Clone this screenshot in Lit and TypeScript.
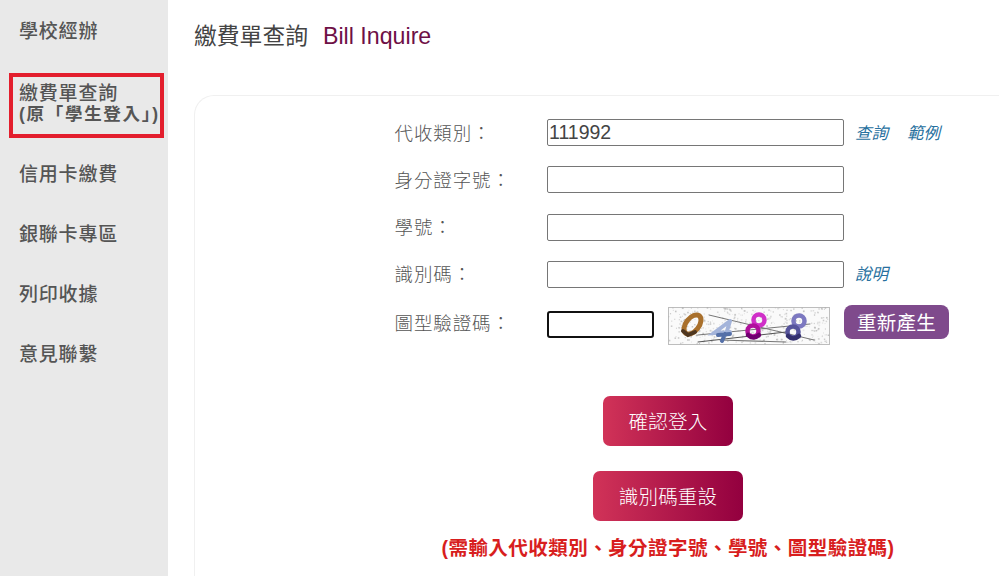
import { LitElement, html, css, svg } from "lit";
import { customElement } from "lit/decorators.js";

const rnd = (i: number, k: number) => {
  const v = Math.sin(i * 12.9898 + k * 78.233) * 43758.5453;
  return v - Math.floor(v);
};
const noise = Array.from({ length: 420 }, (_, i) => ({
  x: rnd(i, 1) * 160,
  y: rnd(i, 2) * 36,
  s: 0.8 + rnd(i, 3) * 1,
  o: 0.2 + rnd(i, 4) * 0.5,
}));

const captcha = svg`
  <svg class="captcha" viewBox="0 0 162 38" width="162" height="38" aria-label="captcha">
    <rect x="0.5" y="0.5" width="161" height="37" fill="#fafafa" stroke="#bdbdbd"/>
    ${noise.map((n) => svg`<rect x=${n.x} y=${n.y} width=${n.s} height=${n.s} fill="#a8a8a8" opacity=${n.o}/>`)}
    <g fill="none" stroke-linecap="round">
      <path d="M41 8 L146 33" stroke="#777" stroke-width="1"/>
      <path d="M30 28 L142 17" stroke="#777" stroke-width="1"/>
      <path d="M30 35 L118 25" stroke="#555" stroke-width="1"/>
      <path d="M52 33 L118 35" stroke="#777" stroke-width="1.2"/>
      <ellipse cx="24.5" cy="17.5" rx="6.5" ry="11" transform="rotate(38 24.5 17.5)" stroke="#a9702c" stroke-width="5"/>
      <path d="M15 24 L20 28 L27 25" stroke="#4e3620" stroke-width="4"/>
      <path d="M62 14 L46 26 L62 25 M62 14 L59 24" stroke="#a4b4da" stroke-width="4"/>
      <path d="M50 28 L62 27 M57 27 L54 34" stroke="#5570a8" stroke-width="4"/>
      <circle cx="91" cy="13" r="5.5" stroke="#d030c8" stroke-width="4.5"/>
      <circle cx="85" cy="24" r="5.5" stroke="#b0109c" stroke-width="4.5"/>
      <path d="M80 28 Q85 33 91 28" stroke="#700070" stroke-width="4.5"/>
      <circle cx="131" cy="14" r="5.5" stroke="#7c78c0" stroke-width="4.5"/>
      <circle cx="125" cy="25" r="5.5" stroke="#56549c" stroke-width="4.5"/>
      <path d="M120 29 Q125 34 131 29" stroke="#33306e" stroke-width="4.5"/>
    </g>
  </svg>`;

@customElement("app-root")
export class AppRoot extends LitElement {
  static styles = css`
    :host {
      display: flex;
      width: 999px;
      height: 576px;
      overflow: hidden;
      background: #fff;
      color: #555;
      font-family: "Liberation Sans", "Noto Sans CJK TC", sans-serif;
    }
    .side {
      flex: 0 0 168px;
      background: #e9e9e9;
      display: flex;
      flex-direction: column;
      box-sizing: border-box;
      padding: 20px 0 0 0;
      font-size: 19px;
      line-height: 24px;
      letter-spacing: 0.8px;
      color: #555;
      font-weight: 500;
    }
    .item {
      padding-left: 19px;
      height: 60px;
    }
    .item.first {
      height: 53px;
    }
    .item.hot {
      box-sizing: border-box;
      height: 65px;
      width: 155px;
      margin-left: 9px;
      border: 4px solid #e31e2d;
      padding: 6px 0 0 6px;
      margin-bottom: 25px;
      line-height: 21px;
    }
    .item.hot small {
      display: block;
      font-size: 17.5px;
      line-height: 21px;
      font-weight: 700;
      white-space: nowrap;
      letter-spacing: 1.7px;
    }
    .main {
      flex: 1;
      min-width: 0;
      padding: 22px 0 0 26px;
      display: flex;
      flex-direction: column;
    }
    h1 {
      margin: 0 0 45px;
      font-size: 22.8px;
      line-height: 28px;
      height: 28px;
      font-weight: 400;
      color: #444;
      display: flex;
      gap: 15px;
    }
    h1 span {
      font-size: 23.2px;
      color: #6e1046;
    }
    .card {
      flex: 1;
      margin-right: -30px;
      border: 1px solid #f0f0f0;
      border-right: 0;
      border-bottom: 0;
      border-top-left-radius: 20px;
      padding: 23px 0 0 199.5px;
      display: flex;
      flex-direction: column;
    }
    .row {
      display: flex;
      align-items: center;
      height: 27px;
      margin-bottom: 20.3px;
    }
    label {
      flex: 0 0 152.5px;
      font-size: 18.5px;
      letter-spacing: 0.9px;
      font-weight: 300;
      color: #555;
      white-space: nowrap;
      margin-top: -2px;
    }
    .field {
      box-sizing: border-box;
      width: 297px;
      height: 27px;
      border: 1px solid #767676;
      border-radius: 2px;
      padding: 0 1px;
      font: 19.5px/25px "Liberation Sans", sans-serif;
      color: #444;
      background: #fff;
    }
    .links {
      margin-left: 11px;
      margin-top: -2px;
      display: flex;
      gap: 19px;
      font-size: 16.5px;
      font-style: italic;
      color: #27709e;
    }
    .vrow {
      height: 38px;
      margin-top: -1.3px;
      margin-bottom: 0;
    }
    .vrow label {
      margin-top: -8px;
    }
    .code {
      box-sizing: border-box;
      width: 107px;
      height: 27px;
      margin-top: -2px;
      border: 2px solid #111;
      border-radius: 3px;
      background: #fff;
      margin-right: 14px;
    }
    .captcha {
      display: block;
      margin-right: 14px;
    }
    .regen {
      width: 105px;
      height: 34px;
      margin-top: -8px;
      border-radius: 8px;
      background: #7f4a8c;
      color: #fff;
      font-size: 19.5px;
      letter-spacing: 0.3px;
      display: flex;
      align-items: center;
      justify-content: center;
    }
    .actions {
      width: 548px;
      margin-left: -0.5px;
      display: flex;
      flex-direction: column;
      align-items: center;
      margin-top: 51px;
    }
    .btn {
      height: 50px;
      border-radius: 7px;
      background: linear-gradient(90deg, #d13358, #93003f);
      color: #fff;
      font-size: 19.5px;
      letter-spacing: 0.2px;
      display: flex;
      align-items: center;
      justify-content: center;
      font-weight: 300;
    }
    .b1 { width: 130px; margin-bottom: 25px; }
    .b2 { width: 150px; margin-bottom: 16px; }
    .note {
      color: #d81e1e;
      font-size: 19.5px;
      line-height: 22px;
      font-weight: 700;
      white-space: nowrap;
      letter-spacing: 0.46px;
    }
  `;

  render() {
    return html`
      <nav class="side">
        <div class="item first">學校經辦</div>
        <div class="item hot">繳費單查詢<small>(原「學生登入」)</small></div>
        <div class="item">信用卡繳費</div>
        <div class="item">銀聯卡專區</div>
        <div class="item">列印收據</div>
        <div class="item">意見聯繫</div>
      </nav>
      <main class="main">
        <h1>繳費單查詢<span>Bill Inquire</span></h1>
        <section class="card">
          <div class="row">
            <label>代收類別：</label>
            <div class="field">111992</div>
            <div class="links"><span>查詢</span><span>範例</span></div>
          </div>
          <div class="row"><label>身分證字號：</label><div class="field"></div></div>
          <div class="row"><label>學號：</label><div class="field"></div></div>
          <div class="row">
            <label>識別碼：</label>
            <div class="field"></div>
            <div class="links"><span>說明</span></div>
          </div>
          <div class="row vrow">
            <label>圖型驗證碼：</label>
            <div class="code"></div>
            ${captcha}
            <div class="regen">重新產生</div>
          </div>
          <div class="actions">
            <div class="btn b1">確認登入</div>
            <div class="btn b2">識別碼重設</div>
            <div class="note">(需輸入代收類別、身分證字號、學號、圖型驗證碼)</div>
          </div>
        </section>
      </main>
    `;
  }
}
